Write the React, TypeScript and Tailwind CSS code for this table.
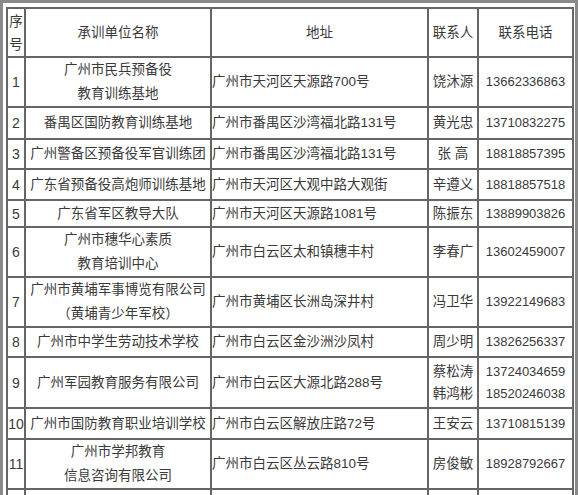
import * as React from "react";

type Row = {
  no: string;
  name: string[];
  addr: string;
  contact: string[];
  phone: string[];
  h: string;
};

const rows: Row[] = [
  { no: "1", name: ["广州市民兵预备役", "教育训练基地"], addr: "广州市天河区天源路700号", contact: ["饶沐源"], phone: ["13662336863"], h: "h-[50px]" },
  { no: "2", name: ["番禺区国防教育训练基地"], addr: "广州市番禺区沙湾福北路131号", contact: ["黄光忠"], phone: ["13710832275"], h: "h-[32px]" },
  { no: "3", name: ["广州警备区预备役军官训练团"], addr: "广州市番禺区沙湾福北路131号", contact: ["张 高"], phone: ["18818857395"], h: "h-[30px]" },
  { no: "4", name: ["广东省预备役高炮师训练基地"], addr: "广州市天河区大观中路大观街", contact: ["辛遵义"], phone: ["18818857518"], h: "h-[31px]" },
  { no: "5", name: ["广东省军区教导大队"], addr: "广州市天河区天源路1081号", contact: ["陈振东"], phone: ["13889903826"], h: "h-[27px]" },
  { no: "6", name: ["广州市穗华心素质", "教育培训中心"], addr: "广州市白云区太和镇穗丰村", contact: ["李春广"], phone: ["13602459007"], h: "h-[50px]" },
  { no: "7", name: ["广州市黄埔军事博览有限公司", "（黄埔青少年军校）"], addr: "广州市黄埔区长洲岛深井村", contact: ["冯卫华"], phone: ["13922149683"], h: "h-[50px]" },
  { no: "8", name: ["广州市中学生劳动技术学校"], addr: "广州市白云区金沙洲沙凤村", contact: ["周少明"], phone: ["13826256337"], h: "h-[30px]" },
  { no: "9", name: ["广州军园教育服务有限公司"], addr: "广州市白云区大源北路288号", contact: ["蔡松涛", "韩鸿彬"], phone: ["13724034659", "18520246038"], h: "h-[51px]" },
  { no: "10", name: ["广州市国防教育职业培训学校"], addr: "广州市白云区解放庄路72号", contact: ["王安云"], phone: ["13710815139"], h: "h-[31px]" },
  { no: "11", name: ["广州市学邦教育", "信息咨询有限公司"], addr: "广州市白云区丛云路810号", contact: ["房俊敏"], phone: ["18928792667"], h: "h-[50px]" },
];

const cell = "border-2 border-[#666] p-0 align-middle";

export default function App() {
  return (
    <div
      className="w-[578px] h-[495px] overflow-hidden bg-white border-l-[3px] border-t-[3px] border-r-[3px] border-[#8a8a8a] pl-[3px] pt-[4px] pr-[3px] text-[#3a3a3a] text-[13.5px] leading-[24px]"
      style={{ fontFamily: '"Liberation Sans", "Noto Sans CJK SC", sans-serif' }}
    >
      <table className="w-[566px] table-fixed border-collapse border-2 border-[#666]">
        <colgroup>
          <col className="w-[18px]" />
          <col className="w-[186px]" />
          <col className="w-[217px]" />
          <col className="w-[50px]" />
          <col className="w-[95px]" />
        </colgroup>
        <thead>
          <tr>
            <th className={`${cell} h-[49px] font-normal text-center leading-[23px]`}>
              <div>序</div>
              <div>号</div>
            </th>
            <th className={`${cell} font-normal text-center`}>承训单位名称</th>
            <th className={`${cell} font-normal text-center`}>地址</th>
            <th className={`${cell} font-normal text-center whitespace-nowrap`}>联系人</th>
            <th className={`${cell} font-normal text-center`}>联系电话</th>
          </tr>
        </thead>
        <tbody>
          {rows.map((r) => (
            <tr key={r.no}>
              <td className={`${cell} ${r.h} text-center whitespace-nowrap text-[14px]`}>{r.no}</td>
              <td className={`${cell} text-center whitespace-nowrap`}>
                {r.name.map((n) => (
                  <div key={n}>{n}</div>
                ))}
              </td>
              <td className={`${cell} text-left whitespace-nowrap`}>{r.addr}</td>
              <td className={`${cell} text-center whitespace-nowrap leading-[22px]`}>
                {r.contact.map((c) => (
                  <div key={c}>{c}</div>
                ))}
              </td>
              <td className={`${cell} text-center whitespace-nowrap leading-[22px] text-[13px]`}>
                {r.phone.map((p) => (
                  <div key={p}>{p}</div>
                ))}
              </td>
            </tr>
          ))}
          <tr>
            <td className={`${cell} h-[30px]`}></td>
            <td className={cell}></td>
            <td className={cell}></td>
            <td className={cell}></td>
            <td className={cell}></td>
          </tr>
        </tbody>
      </table>
    </div>
  );
}
